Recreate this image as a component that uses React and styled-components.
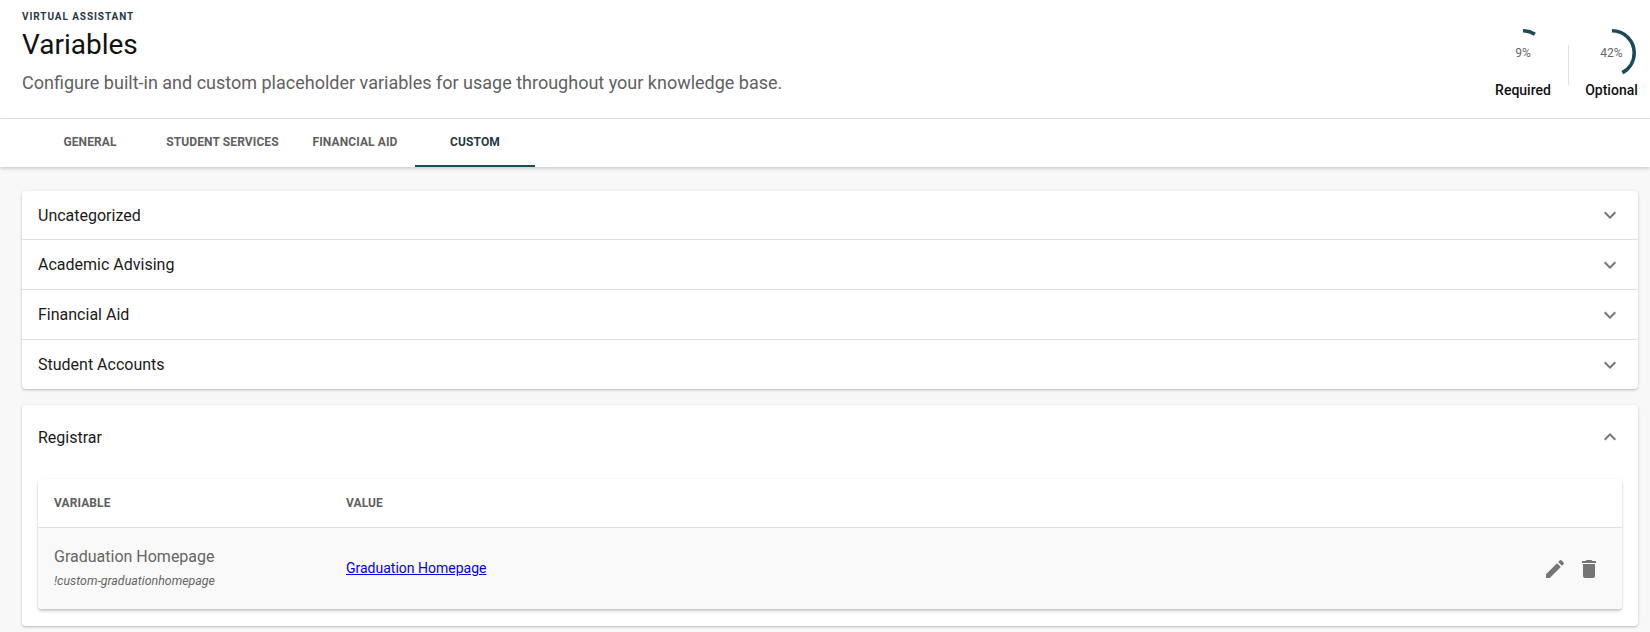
import React from "react";
import styled, { createGlobalStyle } from "styled-components";
import { MdExpandMore, MdExpandLess, MdEdit, MdDelete } from "react-icons/md";

const Global = createGlobalStyle`
  html, body { margin: 0; padding: 0; height: 632px; overflow: hidden; background: #f8f8f8; }
  * { box-sizing: border-box; }
  body { font-family: Roboto, "Liberation Sans", sans-serif; }
`;

const Page = styled.div`
  width: 1650px;
  height: 632px;
  overflow: hidden;
  display: flex;
  flex-direction: column;
`;
const Header = styled.header`
  height: 119px;
  background: #fff;
  border-bottom: 1px solid #e0e0e0;
  display: flex;
  justify-content: space-between;
  padding: 11px 0 0 22px;
`;
const TitleBlock = styled.div`
  display: flex;
  flex-direction: column;
`;
const Eyebrow = styled.div`
  font-size: 10px;
  line-height: 12px;
  font-weight: 700;
  letter-spacing: 0.92px;
  color: #1f3a46;
  text-transform: uppercase;
`;
const Title = styled.h1`
  margin: 5px 0 0;
  font-size: 28px;
  line-height: 34px;
  font-weight: 400;
  color: #111;
`;
const Subtitle = styled.p`
  margin: 9px 0 0;
  font-size: 18px;
  line-height: 24px;
  font-weight: 400;
  color: #616161;
`;
const Stats = styled.div`
  display: flex;
  align-items: flex-start;
  padding-top: 18px;
`;
const Stat = styled.div`
  width: ${(p) => p.$w}px;
  display: flex;
  flex-direction: column;
  align-items: center;
`;
const RingWrap = styled.div`
  position: relative;
  width: 48px;
  height: 48px;
`;
const RingText = styled.span`
  position: absolute;
  inset: 0;
  display: flex;
  align-items: center;
  justify-content: center;
  font-size: 12px;
  color: #666;
`;
const StatLabel = styled.div`
  margin-top: 3px;
  font-size: 14px;
  line-height: 20px;
  font-weight: 500;
  color: #111;
  white-space: nowrap;
`;
const StatDivider = styled.div`
  width: 1px;
  height: 40px;
  margin: 16px 4px 0 0;
  background: #e0e0e0;
`;
const Tabs = styled.nav`
  height: 48px;
  background: #fff;
  display: flex;
  padding-left: 30px;
  box-shadow: 0 2px 3px rgba(0, 0, 0, 0.16);
  position: relative;
`;
const Tab = styled.div`
  width: ${(p) => p.$w}px;
  display: flex;
  align-items: center;
  justify-content: center;
  padding-bottom: 1px;
  font-size: 12px;
  font-weight: 700;
  letter-spacing: 0.1px;
  color: ${(p) => (p.$active ? "#1f3a46" : "#5f5f5f")};
  border-bottom: 2px solid ${(p) => (p.$active ? "#1b4a5a" : "transparent")};
  white-space: nowrap;
`;
const Content = styled.main`
  flex: 1;
  padding: 24px 12px 0 22px;
  display: flex;
  flex-direction: column;
  gap: 16px;
`;
const Card = styled.section`
  background: #fff;
  border-radius: 4px;
  padding-bottom: ${(p) => p.$pb || 0}px;
  box-shadow: 0 1px 3px rgba(0, 0, 0, 0.22), 0 1px 1px rgba(0, 0, 0, 0.06);
`;
const AccordionRow = styled.div`
  height: ${(p) => p.$h || 50}px;
  display: flex;
  align-items: center;
  justify-content: space-between;
  padding: 0 16px;
  font-size: 16px;
  color: #1a1a1a;
  border-top: ${(p) => (p.$first ? "none" : "1px solid #e0e0e0")};
  svg { font-size: 24px; color: #757575; }
`;
const RegistrarRow = styled(AccordionRow)`
  margin-bottom: 10px;
`;
const TableCard = styled.div`
  margin: 0 16px;
  background: #fff;
  border-radius: 4px;
  box-shadow: 0 2px 3px rgba(0, 0, 0, 0.22), 0 0 2px rgba(0, 0, 0, 0.06);
`;
const TableGrid = styled.div`
  display: grid;
  grid-template-columns: 292px 1fr auto;
  align-items: center;
  padding-left: 16px;
  padding-right: 21px;
`;
const TableHead = styled(TableGrid)`
  height: 49px;
  border-bottom: 1px solid #e0e0e0;
  font-size: 12px;
  font-weight: 700;
  letter-spacing: 0.1px;
  color: #5f5f5f;
`;
const TableRow = styled(TableGrid)`
  height: 81px;
  padding-bottom: 2px;
  background: #f9f9f9;
  border-radius: 0 0 4px 4px;
`;
const VarName = styled.div`
  font-size: 16px;
  line-height: 20px;
  color: #666;
`;
const VarKey = styled.div`
  margin-top: 7px;
  font-size: 12.4px;
  line-height: 14px;
  font-style: italic;
  color: #666;
`;
const ValueLink = styled.a`
  font-size: 14px;
  color: #0000ee;
  text-decoration: underline;
`;
const Actions = styled.div`
  display: flex;
  gap: 10px;
  margin-top: 3px;
  svg { display: block; font-size: 24px; color: #757575; }
`;

const Ring = ({ value }) => {
  const r = 22.2;
  const c = 2 * Math.PI * r;
  return (
    <RingWrap>
      <svg width="48" height="48" viewBox="0 0 48 48" style={{ transform: "rotate(-90deg)" }}>
        <circle
          cx="24"
          cy="24"
          r={r}
          fill="none"
          stroke="#1b4a5a"
          strokeWidth="3.6"
          strokeDasharray={`${(c * value) / 100} ${c}`}
        />
      </svg>
      <RingText>{value}%</RingText>
    </RingWrap>
  );
};

const sections = ["Uncategorized", "Academic Advising", "Financial Aid", "Student Accounts"];
const tabs = [
  ["GENERAL", 120],
  ["STUDENT SERVICES", 145],
  ["FINANCIAL AID", 120],
  ["CUSTOM", 120, true],
];

export default function App() {
  return (
    <Page>
      <Global />
      <Header>
        <TitleBlock>
          <Eyebrow>Virtual Assistant</Eyebrow>
          <Title>Variables</Title>
          <Subtitle>Configure built-in and custom placeholder variables for usage throughout your knowledge base.</Subtitle>
        </TitleBlock>
        <Stats>
          <Stat $w={90}>
            <Ring value={9} />
            <StatLabel>Required</StatLabel>
          </Stat>
          <StatDivider />
          <Stat $w={77}>
            <Ring value={42} />
            <StatLabel>Optional</StatLabel>
          </Stat>
        </Stats>
      </Header>
      <Tabs>
        {tabs.map(([label, w, active]) => (
          <Tab key={label} $w={w} $active={active}>{label}</Tab>
        ))}
      </Tabs>
      <Content>
        <Card>
          {sections.map((s, i) => (
            <AccordionRow key={s} $first={i === 0} $h={i === 0 ? 48 : 50}>
              {s}
              <MdExpandMore />
            </AccordionRow>
          ))}
        </Card>
        <Card $pb={17}>
          <RegistrarRow $first $h={64}>
            Registrar
            <MdExpandLess />
          </RegistrarRow>
          <TableCard>
            <TableHead>
              <span>VARIABLE</span>
              <span>VALUE</span>
            </TableHead>
            <TableRow>
              <div>
                <VarName>Graduation Homepage</VarName>
                <VarKey>!custom-graduationhomepage</VarKey>
              </div>
              <div><ValueLink href="#">Graduation Homepage</ValueLink></div>
              <Actions>
                <MdEdit />
                <MdDelete />
              </Actions>
            </TableRow>
          </TableCard>
        </Card>
      </Content>
    </Page>
  );
}
